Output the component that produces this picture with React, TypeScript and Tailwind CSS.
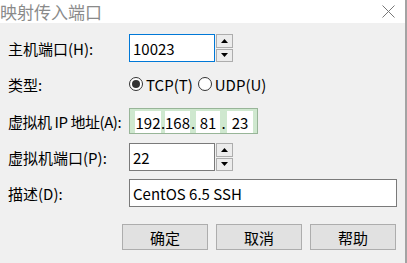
import type { ReactNode } from 'react';

const FONT = { fontFamily: '"Noto Sans CJK SC", "Noto Sans", sans-serif' };

function Spinner() {
  return (
    <div className="ml-[1px] flex h-[28px] w-[17px] shrink-0 flex-col gap-[1px]">
      <div className="flex flex-1 items-center justify-center border border-[#adadad] bg-[#ececec]">
        <svg width="7" height="4" viewBox="0 0 7 4">
          <path d="M0 4 L3.5 0 L7 4 Z" fill="#000" />
        </svg>
      </div>
      <div className="flex flex-1 items-center justify-center border border-[#adadad] bg-[#ececec]">
        <svg width="7" height="4" viewBox="0 0 7 4">
          <path d="M0 0 L3.5 4 L7 0 Z" fill="#000" />
        </svg>
      </div>
    </div>
  );
}

function Row({
  label,
  children,
  className,
  labelClass,
}: {
  label: string;
  children: ReactNode;
  className?: string;
  labelClass?: string;
}) {
  return (
    <div className={`flex items-center ${className ?? ''}`}>
      <div className={`w-[121px] shrink-0 whitespace-nowrap text-[15px] leading-none text-black ${labelClass ?? ''}`}>
        {label}
      </div>
      {children}
    </div>
  );
}

function Radio({ checked, label }: { checked?: boolean; label: string }) {
  return (
    <div className="flex shrink-0 items-center">
      <div className="flex h-[14px] w-[14px] items-center justify-center rounded-full border border-[#333] bg-white">
        {checked && <div className="h-[8px] w-[8px] rounded-full bg-[#333]" />}
      </div>
      <span className="ml-[3px] whitespace-nowrap text-[15px] leading-none text-black">{label}</span>
    </div>
  );
}

const octets = [
  { v: '192', w: 'w-[26px]' },
  { v: '168', w: 'w-[25px]' },
  { v: '81', w: 'w-[24px]' },
  { v: '23', w: 'w-[26px]' },
];

function IpBox() {
  return (
    <div className="flex h-[26px] w-[129px] shrink-0 items-end border border-[#98b598] bg-[#cfe8cf] pl-[5px]">
      {octets.map((o, i) => (
        <div key={i} className="flex shrink-0 items-end">
          {i > 0 && (
            <span
              className={`${i === 1 ? 'w-[4px]' : i === 2 ? 'w-[6px]' : 'w-[7px]'} shrink-0 pb-[3px] text-center text-[15px] leading-none`}
            >
              .
            </span>
          )}
          <div className={`${o.w} flex h-[22px] shrink-0 items-center justify-center bg-white text-[15px] leading-none text-black`}>
            {o.v}
          </div>
        </div>
      ))}
    </div>
  );
}

function Btn({ children }: { children: ReactNode }) {
  return (
    <div className="flex h-[26px] w-[86px] items-center justify-center border border-[#adadad] bg-[#e1e1e1] text-[15px] leading-none text-black">
      {children}
    </div>
  );
}

export default function App() {
  return (
    <div className="flex h-[263px] w-[407px] flex-col border-r-2 border-[#a3a3a3] bg-[#f0f0f0]" style={FONT}>
      <div className="flex h-[23px] items-center justify-between bg-white pr-[10px]">
        <span className="text-[17px] leading-none text-[#8a8a8a]">映射传入端口</span>
        <svg width="13" height="13" viewBox="0 0 13 13">
          <path d="M0.5 0.5 L12.5 12.5 M12.5 0.5 L0.5 12.5" stroke="#777" strokeWidth="1" />
        </svg>
      </div>

      <div className="flex flex-col pl-[8px] pt-[11px]">
        <Row label="主机端口(H):">
          <div className="flex h-[28px] w-[86px] shrink-0 items-center border border-[#0078d7] bg-white pl-[3px] text-[15px] leading-none text-black">
            10023
          </div>
          <Spinner />
        </Row>

        <Row label="类型:" className="mt-[11px] h-[22px]">
          <Radio checked label="TCP(T)" />
          <div className="ml-[5px]">
            <Radio label="UDP(U)" />
          </div>
        </Row>

        <Row label="虚拟机 IP 地址(A):" className="mt-[13px]" labelClass="tracking-[-0.45px]">
          <IpBox />
        </Row>

        <Row label="虚拟机端口(P):" className="mt-[9px]">
          <div className="flex h-[28px] w-[86px] shrink-0 items-center border border-[#7a7a7a] bg-white pl-[3px] text-[15px] leading-none text-black">
            22
          </div>
          <Spinner />
        </Row>

        <Row label="描述(D):" className="mt-[8px]">
          <div className="flex h-[28px] w-[268px] shrink-0 items-center border border-[#7a7a7a] bg-white pl-[3px] text-[15px] leading-none text-black">
            CentOS 6.5 SSH
          </div>
        </Row>

        <div className="ml-[114px] mt-[17px] flex gap-[8px]">
          <Btn>确定</Btn>
          <Btn>取消</Btn>
          <Btn>帮助</Btn>
        </div>
      </div>
    </div>
  );
}
